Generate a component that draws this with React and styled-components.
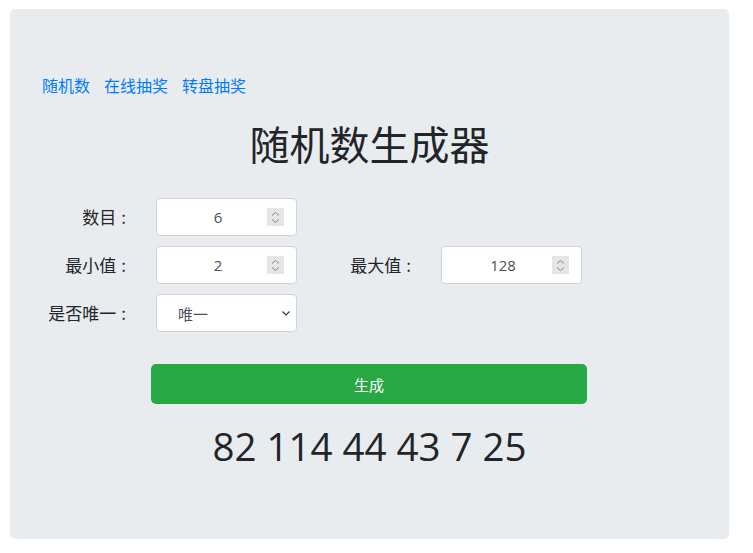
import React from "react";
import styled, { createGlobalStyle } from "styled-components";

const Global = createGlobalStyle`
  html, body { margin: 0; padding: 0; background: #fff; }
  body {
    font-family: "Open Sans", "Noto Sans CJK SC", sans-serif;
    color: #212529;
    font-size: 16px;
    line-height: 1.5;
  }
  * { box-sizing: border-box; }
`;

const Card = styled.div`
  margin: 9px 0 0 10px;
  width: 719px;
  height: 530px;
  background: #e9ecef;
  border-radius: 5px;
  padding: 64px 32px 0;
`;

const Nav = styled.nav`
  display: flex;
  gap: 14px;
  height: 24px;
  align-items: center;
`;

const NavLink = styled.a`
  color: #007bff;
  text-decoration: none;
  font-size: 16px;
  font-family: "Noto Sans CJK SC", sans-serif;
`;

const Title = styled.h1`
  margin: 22px 0 0;
  text-align: center;
  font-size: 40px;
  line-height: 48px;
  font-weight: 400;
  font-family: "Noto Sans CJK SC", sans-serif;
`;

const Form = styled.form`
  margin: 31px -15px 0;
  display: flex;
  flex-direction: column;
  gap: 10px;
`;

const Row = styled.div`
  display: flex;
  align-items: center;
`;

const Label = styled.label`
  width: 114px;
  padding: 0 15px 0 0;
  text-align: right;
  font-size: 17px;
  font-family: "Noto Sans CJK SC", sans-serif;
  line-height: 38px;
  white-space: nowrap;
`;

const Colon = styled.span`
  margin-left: 5px;
`;

const Cell = styled.div`
  width: 171px;
  padding: 0 15px;
`;

const Box = styled.div`
  height: 38px;
  background: #fff;
  border: 1px solid #ced4da;
  border-radius: 4px;
  display: flex;
  align-items: center;
  padding: 0 12px;
`;

const NumInput = styled.input`
  flex: 1;
  min-width: 0;
  border: none;
  outline: none;
  background: transparent;
  text-align: center;
  font-family: "Open Sans", sans-serif;
  font-size: 15px;
  color: #495057;
  padding: 0;
`;

const Spinner = styled.span`
  width: 17px;
  height: 18px;
  background: #e6e6e6;
  display: flex;
  align-items: center;
  justify-content: center;
`;

const Select = styled.select`
  appearance: none;
  width: 100%;
  height: 38px;
  background: #fff url("data:image/svg+xml,%3Csvg xmlns='http://www.w3.org/2000/svg' width='8' height='5' viewBox='0 0 8 5'%3E%3Cpath d='M0.5 0.5 L4 4 L7.5 0.5' fill='none' stroke='%23333' stroke-width='1.1'/%3E%3C/svg%3E") no-repeat right 6px center;
  border: 1px solid #ced4da;
  border-radius: 4px;
  padding: 0 20px 0 21px;
  font-family: "Noto Sans CJK SC", sans-serif;
  font-size: 15px;
  color: #495057;
  outline: none;
`;

const ButtonWrap = styled.div`
  margin: 32px 0 0 109px;
  width: 436px;
`;

const Button = styled.button`
  width: 100%;
  height: 40px;
  border: none;
  border-radius: 5px;
  background: #28a745;
  color: #fff;
  font-family: "Noto Sans CJK SC", sans-serif;
  font-size: 15px;
`;

const Result = styled.div`
  margin-top: 18px;
  text-align: center;
  font-size: 38.5px;
  line-height: 48px;
  font-family: "Open Sans", sans-serif;
  color: #212529;
`;

const SpinIcon = () => (
  <svg width="9" height="13" viewBox="0 0 9 13">
    <path d="M1 4.5 L4.5 1.5 L8 4.5" fill="none" stroke="#888" strokeWidth="1" />
    <path d="M1 8.5 L4.5 11.5 L8 8.5" fill="none" stroke="#888" strokeWidth="1" />
  </svg>
);

const NumberField = ({ value }) => (
  <Box>
    <NumInput type="text" defaultValue={value} />
    <Spinner>
      <SpinIcon />
    </Spinner>
  </Box>
);

const FieldLabel = ({ children }) => (
  <Label>
    {children}
    <Colon>:</Colon>
  </Label>
);

export default function App() {
  return (
    <>
      <Global />
      <Card>
        <Nav>
          <NavLink href="#">随机数</NavLink>
          <NavLink href="#">在线抽奖</NavLink>
          <NavLink href="#">转盘抽奖</NavLink>
        </Nav>
        <Title>随机数生成器</Title>
        <Form onSubmit={(e) => e.preventDefault()}>
          <Row>
            <FieldLabel>数目</FieldLabel>
            <Cell>
              <NumberField value="6" />
            </Cell>
          </Row>
          <Row>
            <FieldLabel>最小值</FieldLabel>
            <Cell>
              <NumberField value="2" />
            </Cell>
            <FieldLabel>最大值</FieldLabel>
            <Cell>
              <NumberField value="128" />
            </Cell>
          </Row>
          <Row>
            <FieldLabel>是否唯一</FieldLabel>
            <Cell>
              <Select defaultValue="1">
                <option value="1">唯一</option>
                <option value="0">不唯一</option>
              </Select>
            </Cell>
          </Row>
        </Form>
        <ButtonWrap>
          <Button type="button">生成</Button>
        </ButtonWrap>
        <Result>82 114 44 43 7 25</Result>
      </Card>
    </>
  );
}
